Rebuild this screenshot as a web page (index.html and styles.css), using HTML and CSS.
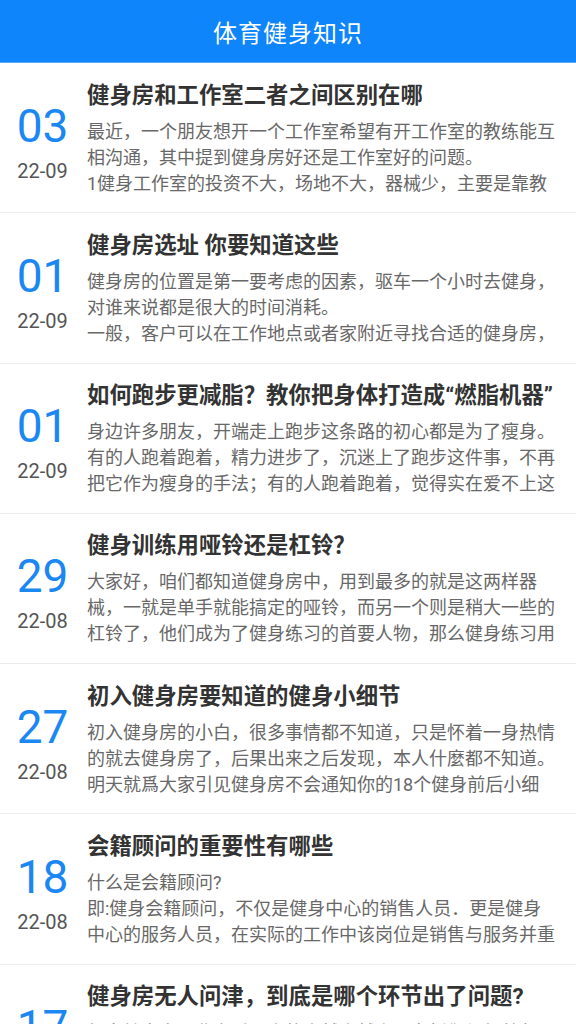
FILE: index.html
```html
<!DOCTYPE html>
<html lang="zh-CN">
<head>
    <meta charset="UTF-8" />
    <meta name="viewport" content="width=device-width, initial-scale=1.0"/>
    <title>体育健身知识</title>
    <link rel="stylesheet" href="styles.css">
</head>
<body>

<!-- 顶部标题栏 -->
<div class="top-bar">
    <h1>体育健身知识</h1>
</div>

<!-- 文章列表 -->
<ul class="news-list">
    <li class="news-item">
        <div class="news-date">
            <span class="day">03</span>
            <span class="month">22-09</span>
        </div>
        <div class="news-text">
            <h2>健身房和工作室二者之间区别在哪</h2>
            <p>最近，一个朋友想开一个工作室希望有开工作室的教练能互相沟通，其中提到健身房好还是工作室好的问题。<br>1健身工作室的投资不大，场地不大，器械少，主要是靠教练的专业能力来吸引会员。</p>
        </div>
    </li>
    <li class="news-item">
        <div class="news-date">
            <span class="day">01</span>
            <span class="month">22-09</span>
        </div>
        <div class="news-text">
            <h2>健身房选址 你要知道这些</h2>
            <p>健身房的位置是第一要考虑的因素，驱车一个小时去健身，对谁来说都是很大的时间消耗。<br>一般，客户可以在工作地点或者家附近寻找合适的健身房，这样才能坚持下去。</p>
        </div>
    </li>
    <li class="news-item">
        <div class="news-date">
            <span class="day">01</span>
            <span class="month">22-09</span>
        </div>
        <div class="news-text">
            <h2>如何跑步更减脂？教你把身体打造成“燃脂机器”</h2>
            <p>身边许多朋友，开端走上跑步这条路的初心都是为了瘦身。有的人跑着跑着，精力进步了，沉迷上了跑步这件事，不再把它作为瘦身的手法；有的人跑着跑着，觉得实在爱不上这项运动。</p>
        </div>
    </li>
    <li class="news-item">
        <div class="news-date">
            <span class="day">29</span>
            <span class="month">22-08</span>
        </div>
        <div class="news-text">
            <h2>健身训练用哑铃还是杠铃？</h2>
            <p>大家好，咱们都知道健身房中，用到最多的就是这两样器械，一就是单手就能搞定的哑铃，而另一个则是稍大一些的杠铃了，他们成为了健身练习的首要人物，那么健身练习用哪个更好呢？</p>
        </div>
    </li>
    <li class="news-item">
        <div class="news-date">
            <span class="day">27</span>
            <span class="month">22-08</span>
        </div>
        <div class="news-text">
            <h2>初入健身房要知道的健身小细节</h2>
            <p>初入健身房的小白，很多事情都不知道，只是怀着一身热情的就去健身房了，后果出来之后发现，本人什麼都不知道。明天就爲大家引见健身房不会通知你的18个健身前后小细节。</p>
        </div>
    </li>
    <li class="news-item">
        <div class="news-date">
            <span class="day">18</span>
            <span class="month">22-08</span>
        </div>
        <div class="news-text">
            <h2>会籍顾问的重要性有哪些</h2>
            <p>什么是会籍顾问?<br>即:健身会籍顾问，不仅是健身中心的销售人员．更是健身中心的服务人员，在实际的工作中该岗位是销售与服务并重的。</p>
        </div>
    </li>
    <li class="news-item">
        <div class="news-date">
            <span class="day">17</span>
            <span class="month">22-08</span>
        </div>
        <div class="news-text">
            <h2>健身房无人问津，到底是哪个环节出了问题?</h2>
            <p>很多健身房开业之后，来的人越来越少，老板们都很着急，却找不到问题出在哪里。</p>
        </div>
    </li>
</ul>

</body>
</html>
```

FILE: styles.css
```css
/* 页面基础 */
* {
    box-sizing: border-box;
    margin: 0;
    padding: 0;
}

body {
    font-family: Roboto, "Noto Sans CJK SC", sans-serif;
    background: #fff;
    width: 576px;
    overflow: hidden;
}

/* 顶部标题栏 */
.top-bar {
    height: 63px;
    background: #0f85fb;
    border-bottom: 1px solid #5aa9f7;
    display: flex;
    justify-content: center;
    align-items: center;
}
.top-bar h1 {
    color: #fff;
    font-size: 24px;
    font-weight: 400;
    letter-spacing: 1px;
}

/* 文章列表 */
.news-list {
    list-style: none;
}
.news-item {
    display: flex;
    padding: 16.5px 19px 15.8px 0;
    border-bottom: 1px solid #ececec;
}

/* 左侧日期 */
.news-date {
    width: 87px;
    flex-shrink: 0;
    padding-top: 23px;
    padding-right: 2px;
    display: flex;
    flex-direction: column;
    align-items: center;
}
.news-date .day {
    font-size: 46px;
    line-height: 46px;
    color: #1b87f2;
}
.news-date .month {
    margin-top: 10px;
    font-size: 20px;
    line-height: 24px;
    color: #555;
}

/* 右侧内容 */
.news-text {
    width: 470px;
}
.news-text h2 {
    font-size: 22.4px;
    line-height: 30px;
    font-weight: 700;
    color: #333;
    white-space: nowrap;
}
.news-text p {
    margin-top: 9px;
    font-size: 18px;
    line-height: 26px;
    height: 78px;
    color: #686868;
    overflow: hidden;
}
```
